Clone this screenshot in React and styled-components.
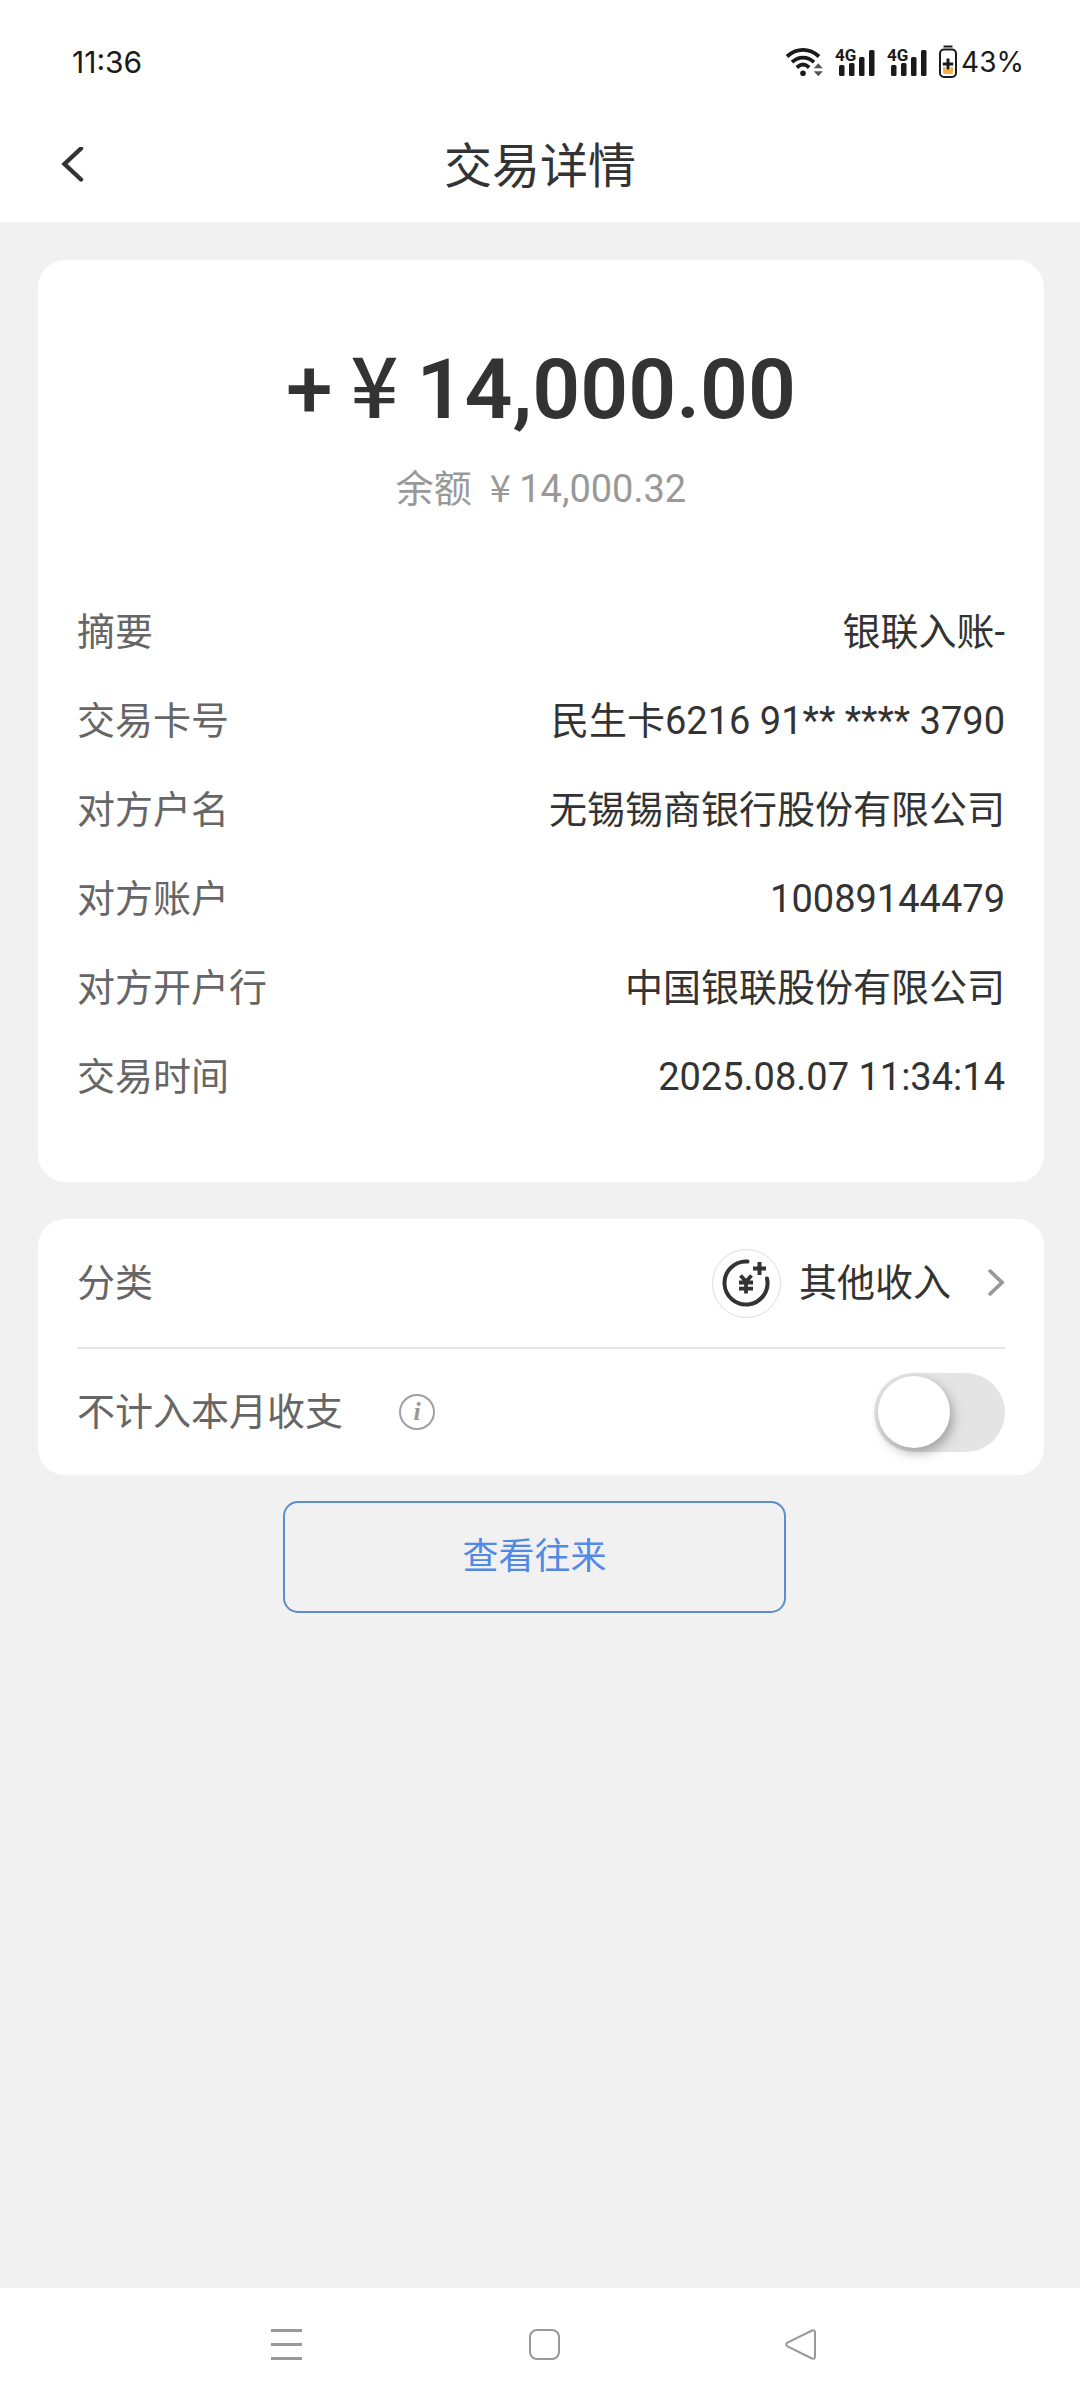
import React, { useState } from 'react';
import styled, { createGlobalStyle } from 'styled-components';

const GlobalStyle = createGlobalStyle`
  * {
    box-sizing: border-box;
  }

  body {
    margin: 0;
    background: #f1f1f1;
    color: #333;
    font-family: Roboto, "Noto Sans CJK SC", sans-serif;
    font-size: 38px;
    line-height: 57px;
  }

  button {
    font: inherit;
    color: inherit;
    background: none;
    border: 0;
    padding: 0;
    cursor: pointer;
  }

  svg {
    display: block;
    flex: none;
  }
`;

const Page = styled.div`
  display: flex;
  flex-direction: column;
  min-height: 100vh;
`;

const StatusBar = styled.div`
  display: flex;
  align-items: center;
  justify-content: space-between;
  height: 110px;
  padding: 14px 56px 0 72px;
  background: #fff;
  color: #1a1a1a;
  font-family: Inter, sans-serif;
  font-size: 30px;
  line-height: 40px;
`;

const StatusIcons = styled.div`
  display: flex;
  align-items: center;
  gap: 12px;
`;

const BatteryStatus = styled.div`
  display: flex;
  align-items: center;
  gap: 4px;
  font-size: 28px;
`;

const Header = styled.header`
  display: grid;
  grid-template-columns: 80px 1fr 80px;
  align-items: center;
  height: 112px;
  padding: 0 32px;
  background: #fff;
`;

const BackButton = styled.button`
  display: flex;
  align-items: center;
  justify-content: center;
  height: 80px;
`;

const Title = styled.h1`
  margin: 0;
  font-size: 48px;
  font-weight: 400;
  text-align: center;
`;

const Main = styled.main`
  flex: 1;
  padding: 38px 36px 38px 38px;
`;

const Card = styled.section`
  background: #fff;
  border-radius: 27px;
  padding: 0 39px;

  & + & {
    margin-top: 37px;
  }
`;

const Summary = styled.div`
  padding-top: 80px;
  text-align: center;
`;

const Amount = styled.div`
  font-size: 84px;
  font-weight: 600;
  line-height: 100px;
`;

const Sign = styled.span`
  font-weight: 500;
`;

const Currency = styled.span`
  display: inline-block;
  width: 1em;
  font-family: "Noto Sans CJK SC", sans-serif;
  font-weight: ${({ $medium }) => ($medium ? 500 : 400)};
  line-height: 1;
  text-align: center;
`;

const Balance = styled.div`
  margin-top: 20px;
  color: #999;
  line-height: 58px;
`;

const Details = styled.dl`
  display: flex;
  flex-direction: column;
  gap: 32px;
  margin: 0;
  padding: 86px 0 76px;
`;

const Detail = styled.div`
  display: flex;
  justify-content: space-between;

  dt {
    color: #666;
  }

  dd {
    margin: 0;
    text-align: right;
  }
`;

const SettingRow = styled.div`
  display: flex;
  align-items: center;
  justify-content: space-between;
  height: ${({ $divided }) => ($divided ? '130px' : '126px')};
  border-bottom: ${({ $divided }) => ($divided ? '2px solid #e5e5e5' : '0')};
`;

const SettingLabel = styled.div`
  display: flex;
  align-items: center;
  gap: 56px;
  color: #666;
`;

const CategoryButton = styled.button`
  display: flex;
  align-items: center;
`;

const CategoryIcon = styled.span`
  display: flex;
  align-items: center;
  justify-content: center;
  width: 69px;
  height: 69px;
  margin-right: 18px;
  border: 1px solid #ddd;
  border-radius: 50%;
`;

const CategoryName = styled.span`
  margin-right: 36px;
`;

const Switch = styled.input`
  appearance: none;
  display: flex;
  align-items: center;
  width: 131px;
  height: 79px;
  margin: 0;
  padding: 0 4px;
  border-radius: 40px;
  background: ${({ checked }) => (checked ? '#5b8fdc' : '#e4e4e4')};
  justify-content: ${({ checked }) => (checked ? 'flex-end' : 'flex-start')};
  cursor: pointer;

  &::before {
    content: '';
    width: 72px;
    height: 72px;
    border-radius: 50%;
    background: #fff;
    box-shadow: 3px 5px 12px rgba(0, 0, 0, 0.3);
  }
`;

const Actions = styled.div`
  display: flex;
  justify-content: center;
  padding: 26px 13px 0 0;
`;

const OutlineButton = styled.button`
  width: 503px;
  height: 112px;
  border: 2px solid #5b8dcb;
  border-radius: 15px;
  color: #5389e6;
  font-size: 36px;
`;

const NavBar = styled.nav`
  display: grid;
  grid-template-columns: repeat(3, 1fr);
  height: 112px;
  padding: 0 148px 0 158px;
  background: #fff;
`;

const NavButton = styled.button`
  display: flex;
  align-items: center;
  justify-content: center;
`;

const WifiIcon = () => (
  <svg width="38" height="34" viewBox="0 0 38 34" fill="none" stroke="#1a1a1a" strokeWidth="3.8" aria-hidden="true">
    <path d="M2 11.5C11.5 2.6 24.5 2.6 34 11.5" />
    <path d="M7 17.2C13.5 11 22.5 11 29 17.2" />
    <path d="M11.8 22.5C15.8 18.7 20.2 18.7 24.2 22.5" />
    <circle cx="18" cy="28.3" r="2.8" fill="#1a1a1a" stroke="none" />
    <path d="M28.8 23.3L33.3 18.3L37.8 23.3ZM28.8 26.3L33.3 31.3L37.8 26.3Z" fill="#555" stroke="none" />
  </svg>
);

const SignalIcon = () => (
  <svg width="40" height="34" viewBox="0 0 40 34" fill="#1a1a1a" aria-hidden="true">
    <rect x="4" y="20" width="5.5" height="11" rx="1.5" />
    <rect x="14" y="18" width="5.5" height="13" rx="1.5" />
    <rect x="24" y="12" width="5.5" height="19" rx="1.5" />
    <rect x="34" y="5" width="5.5" height="26" rx="1.5" />
    <text x="0" y="16" fontFamily="Roboto, sans-serif" fontSize="17" fontWeight="700" stroke="#fff" strokeWidth="2" paintOrder="stroke">4G</text>
  </svg>
);

const BatteryIcon = () => (
  <svg width="18" height="34" viewBox="0 0 18 34" aria-hidden="true">
    <path d="M4.5 1.5H13.5" stroke="#1a1a1a" strokeWidth="2" />
    <rect x="1" y="4.5" width="16" height="27.5" rx="4" fill="#fff" stroke="#1a1a1a" strokeWidth="2" />
    <path d="M4 22H14V27Q14 29 12 29H6Q4 29 4 27Z" fill="#f5b13d" />
    <path d="M9 13.5V24.5M3.8 19H14.2" stroke="#fff" strokeWidth="5" />
    <path d="M9 13.5V24.5M3.8 19H14.2" stroke="#1a1a1a" strokeWidth="3" />
  </svg>
);

const BackIcon = () => (
  <svg width="24" height="38" viewBox="0 0 24 38" fill="none" stroke="#333" strokeWidth="4.4" strokeLinecap="round" aria-hidden="true">
    <path d="M21 1.5L4.5 17L21 32.5" />
  </svg>
);

const IncomeIcon = () => (
  <svg width="50" height="50" viewBox="-25 -25 50 50" fill="none" stroke="#333" strokeWidth="4" aria-hidden="true">
    <path d="M1.5 -21.4A21.5 21.5 0 1 0 21 -4.5" strokeLinecap="round" />
    <path d="M13.5 -21V-8M7 -14.5H20" />
    <path d="M-5.5 -7.5L0 -1.5L5.5 -7.5M0 -1.5V10.5M-7 -0.5H7M-7 5.7H7" strokeWidth="3.8" />
  </svg>
);

const ChevronIcon = () => (
  <svg width="18" height="30" viewBox="0 0 18 30" fill="none" stroke="#999" strokeWidth="3.8" aria-hidden="true">
    <path d="M2 2L15 14.5L2 27" />
  </svg>
);

const InfoIcon = () => (
  <svg width="36" height="36" viewBox="0 0 36 36" aria-hidden="true">
    <circle cx="18" cy="18" r="17" fill="none" stroke="#a0a0a0" strokeWidth="2" />
    <text x="18" y="26" textAnchor="middle" fill="#999" fontFamily="Liberation Serif, serif" fontSize="26" fontStyle="italic" fontWeight="700">i</text>
  </svg>
);

const navItems = [
  { label: '菜单', icon: <path d="M0 2.5H31M0 16.5H31M0 30.5H31" strokeWidth="3" /> },
  { label: '主屏幕', icon: <rect x="1" y="2" width="29" height="29" rx="7" /> },
  { label: '返回', icon: <path d="M25 2.5L0.5 14.5Q-2 16.5 0.5 18.5L25 30.5Q28 31.5 28 28.5V4.5Q28 1.5 25 2.5Z" /> },
];

const details = [
  ['摘要', '银联入账-'],
  ['交易卡号', '民生卡6216 91** **** 3790'],
  ['对方户名', '无锡锡商银行股份有限公司'],
  ['对方账户', '10089144479'],
  ['对方开户行', '中国银联股份有限公司'],
  ['交易时间', '2025.08.07 11:34:14'],
];

const App = () => {
  const [excluded, setExcluded] = useState(false);

  return (
    <Page>
      <GlobalStyle />
      <StatusBar>
        <span>11:36</span>
        <StatusIcons>
          <WifiIcon />
          <SignalIcon />
          <SignalIcon />
          <BatteryStatus>
            <BatteryIcon />
            <span>43%</span>
          </BatteryStatus>
        </StatusIcons>
      </StatusBar>
      <Header>
        <BackButton type="button" aria-label="返回">
          <BackIcon />
        </BackButton>
        <Title>交易详情</Title>
      </Header>
      <Main>
        <Card>
          <Summary>
            <Amount>
              <Sign>+</Sign>
              <Currency $medium>¥</Currency>
              14,000.00
            </Amount>
            <Balance>
              余额 <Currency>¥</Currency>
              14,000.32
            </Balance>
          </Summary>
          <Details>
            {details.map(([name, value]) => (
              <Detail key={name}>
                <dt>{name}</dt>
                <dd>{value}</dd>
              </Detail>
            ))}
          </Details>
        </Card>
        <Card>
          <SettingRow $divided>
            <SettingLabel>分类</SettingLabel>
            <CategoryButton type="button">
              <CategoryIcon>
                <IncomeIcon />
              </CategoryIcon>
              <CategoryName>其他收入</CategoryName>
              <ChevronIcon />
            </CategoryButton>
          </SettingRow>
          <SettingRow>
            <SettingLabel>
              <label htmlFor="exclude">不计入本月收支</label>
              <button type="button" aria-label="说明">
                <InfoIcon />
              </button>
            </SettingLabel>
            <Switch
              id="exclude"
              type="checkbox"
              role="switch"
              checked={excluded}
              onChange={(e) => setExcluded(e.target.checked)}
            />
          </SettingRow>
        </Card>
        <Actions>
          <OutlineButton type="button">查看往来</OutlineButton>
        </Actions>
      </Main>
      <NavBar>
        {navItems.map(({ label, icon }) => (
          <NavButton key={label} type="button" aria-label={label}>
            <svg width="32" height="33" viewBox="0 0 32 33" fill="none" stroke="#999" strokeWidth="2" overflow="visible" aria-hidden="true">
              {icon}
            </svg>
          </NavButton>
        ))}
      </NavBar>
    </Page>
  );
};

export default App;
